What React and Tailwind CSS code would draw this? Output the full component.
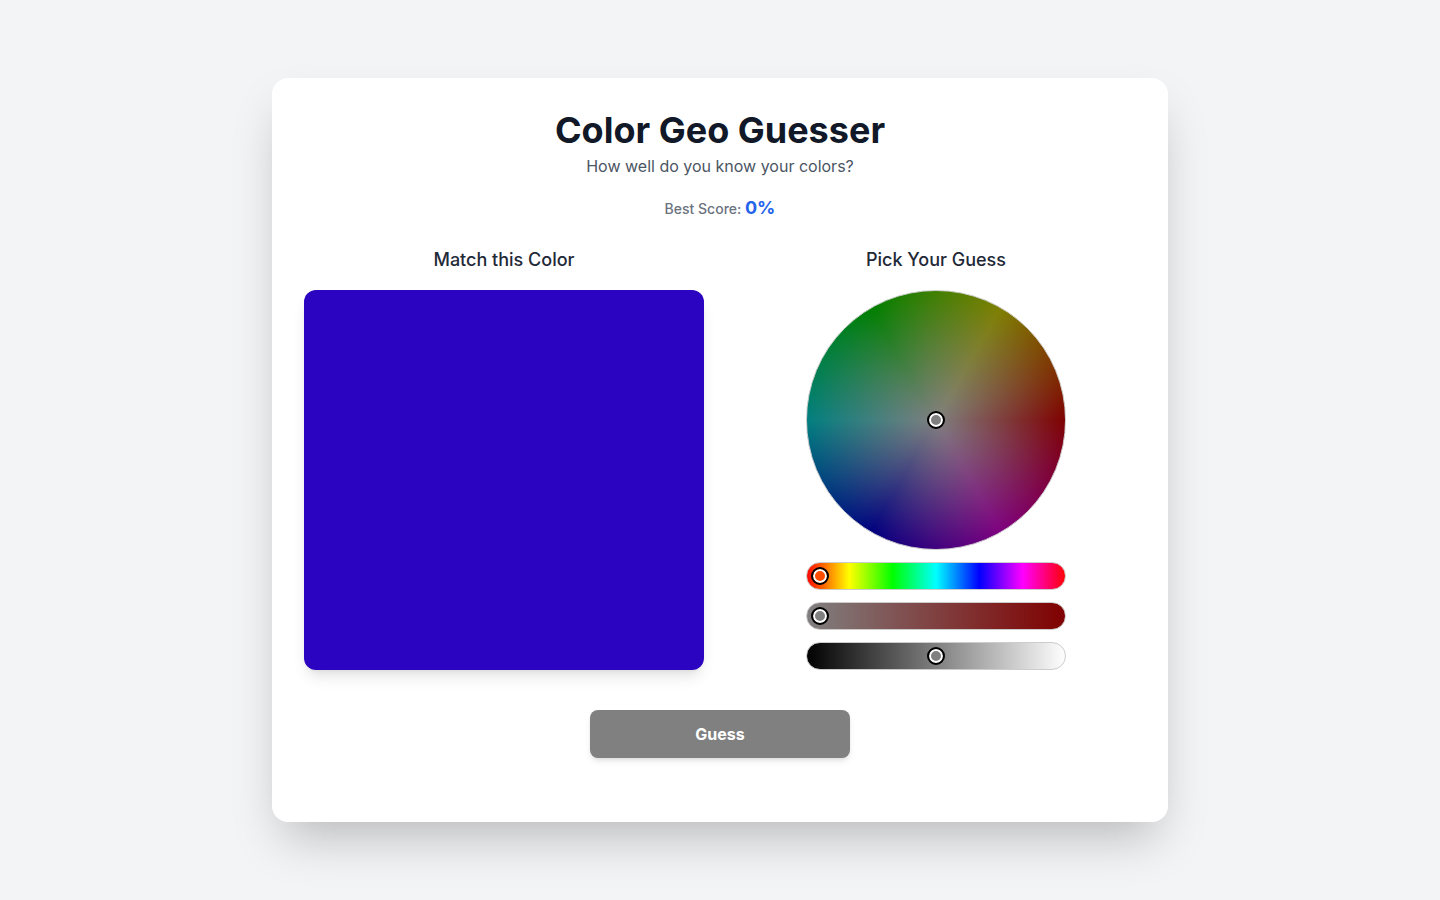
import { useState } from 'react'

const sliderClass =
  'block w-full h-7 px-1 appearance-none rounded-full border border-[#cccccc] bg-origin-border cursor-pointer ' +
  '[&::-webkit-slider-thumb]:appearance-none [&::-webkit-slider-thumb]:size-[18px] [&::-webkit-slider-thumb]:rounded-full ' +
  '[&::-webkit-slider-thumb]:border-2 [&::-webkit-slider-thumb]:border-black [&::-webkit-slider-thumb]:shadow-[inset_0_0_0_2px_#fff] '

function Swatch({ color }) {
  return (
    <div
      className="h-[380px] w-full rounded-xl shadow-lg"
      style={{ backgroundColor: color }}
    />
  )
}

function ColorWheel() {
  return (
    <div className="relative size-[260px] overflow-hidden rounded-full border border-[#cccccc] bg-origin-border bg-[linear-gradient(#00000080,#00000080),radial-gradient(circle_closest-side,#fff,transparent),conic-gradient(from_90deg,red,magenta,blue,aqua,lime,yellow,red)]">
      <div className="absolute inset-0 m-auto size-[18px] rounded-full border-2 border-black bg-[#808080] shadow-[inset_0_0_0_2px_#fff]" />
    </div>
  )
}

function Picker() {
  const [hue, setHue] = useState(0)
  const [saturation, setSaturation] = useState(0)
  const [value, setValue] = useState(50)

  return (
    <div className="flex w-[260px] flex-col gap-3">
      <ColorWheel />
      <input
        type="range"
        aria-label="Hue"
        min="0"
        max="360"
        value={hue}
        onChange={(e) => setHue(Number(e.target.value))}
        className={sliderClass + 'bg-[linear-gradient(to_right,red,yellow,lime,aqua,blue,magenta,red)] [&::-webkit-slider-thumb]:bg-[#ff4d00]'}
      />
      <input
        type="range"
        aria-label="Saturation"
        min="0"
        max="100"
        value={saturation}
        onChange={(e) => setSaturation(Number(e.target.value))}
        className={sliderClass + 'bg-[linear-gradient(to_right,#808080,#800000)] [&::-webkit-slider-thumb]:bg-[#808080]'}
      />
      <input
        type="range"
        aria-label="Brightness"
        min="0"
        max="100"
        value={value}
        onChange={(e) => setValue(Number(e.target.value))}
        className={sliderClass + 'bg-[linear-gradient(to_right,#000,#fff)] [&::-webkit-slider-thumb]:bg-[#808080]'}
      />
    </div>
  )
}

export default function App() {
  return (
    <main className="flex min-h-screen items-center justify-center bg-[#f3f4f6] p-4 font-['Inter',sans-serif]">
      <article className="w-full max-w-4xl rounded-2xl bg-white p-8 shadow-2xl">
        <header className="mb-6 text-center">
          <h1 className="text-4xl font-bold text-[#111827]">Color Geo Guesser</h1>
          <p className="mt-1 text-[#4b5563]">How well do you know your colors?</p>
          <div className="mt-4">
            <span className="text-sm font-medium text-[#6b7280]">Best Score: </span>
            <span className="text-lg font-bold text-[#2563eb]">0%</span>
          </div>
        </header>

        <div className="grid gap-8 md:grid-cols-2">
          <section className="flex flex-col items-center">
            <h2 className="mb-4 text-lg font-medium text-[#1f2937]">Match this Color</h2>
            <Swatch color="#2a04c0" />
          </section>
          <section className="flex flex-col items-center">
            <h2 className="mb-4 text-lg font-medium text-[#1f2937]">Pick Your Guess</h2>
            <Picker />
          </section>
        </div>

        <div className="mt-10 mb-8 flex justify-center">
          <button
            type="button"
            className="h-12 w-[260px] rounded-lg bg-[#808080] font-bold text-white shadow-md"
          >
            Guess
          </button>
        </div>
      </article>
    </main>
  )
}
